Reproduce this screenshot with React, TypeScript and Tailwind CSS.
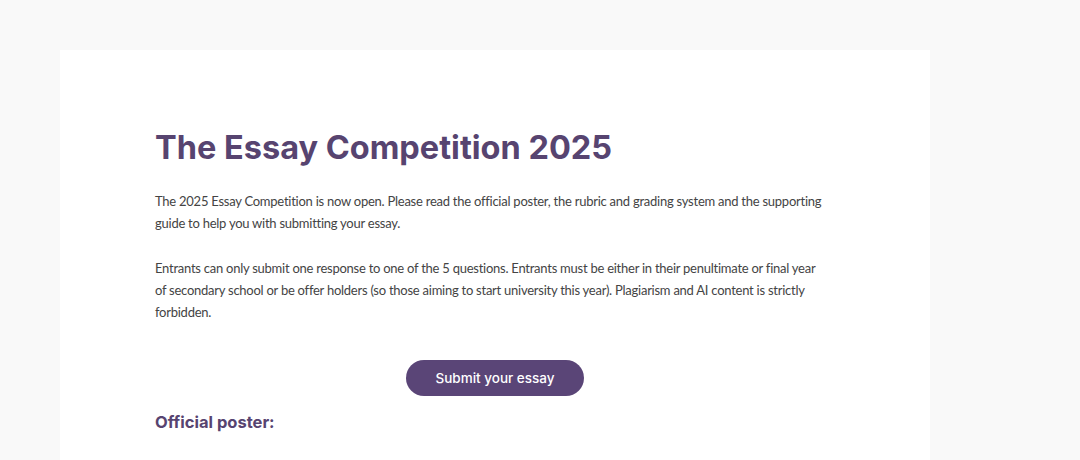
export default function App() {
  return (
    <div className="min-h-[460px] bg-[#f9f9f9] pt-[50px] pl-[60px] overflow-hidden" style={{ height: 460 }}>
      <div className="w-[870px] h-[420px] bg-white">
        <div className="mx-auto w-[680px] pt-[78px]">
          <h1 className="font-['Inter',sans-serif] text-[32.5px] leading-[40px] font-bold text-[#574470]">
            The Essay Competition 2025
          </h1>
          <div className="mt-[22px] pr-[10px] font-['Lato',sans-serif] text-[13px] leading-[22px] tracking-[-0.25px] text-[#444]">
            <p>
              The 2025 Essay Competition is now open. Please read the official poster, the rubric and grading system and the supporting guide to help you with submitting your essay.
            </p>
            <p className="mt-[23px]">
              Entrants can only submit one response to one of the 5 questions. Entrants must be either in their penultimate or final year of secondary school or be offer holders (so those aiming to start university this year). Plagiarism and AI content is strictly forbidden.
            </p>
          </div>
          <div className="mt-[37px] flex justify-center">
            <button className="h-[36px] w-[178px] rounded-full bg-[#5a4577] font-['Inter',sans-serif] text-[13.5px] font-medium text-white">
              Submit your essay
            </button>
          </div>
          <h2 className="mt-[14px] font-['Inter',sans-serif] text-[16.5px] font-bold text-[#574470]">
            Official poster:
          </h2>
        </div>
      </div>
    </div>
  );
}
